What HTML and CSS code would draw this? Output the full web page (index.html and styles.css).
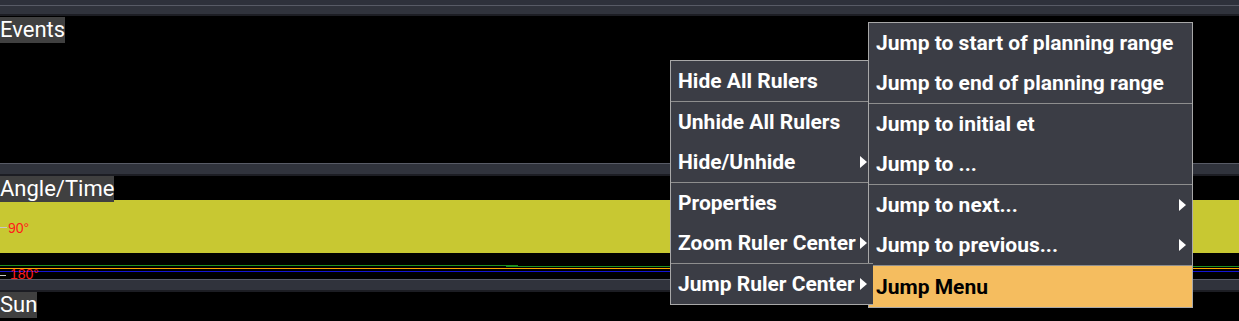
FILE: index.html
```html
<html>

<head>
  <title>Rulers</title>

  <link rel="stylesheet" href="styles.css">
</head>

<body>
  <div class="timeline">
    <div class="sep sep-top"></div>

    <div class="track track-events">
      <span class="track-label">Events</span>
    </div>

    <div class="sep"></div>

    <div class="track track-angle">
      <span class="track-label">Angle/Time</span>
      <div class="band">
        <span class="tick"></span>
        <span class="deg">90°</span>
      </div>
      <div class="plot-lines">
        <div class="line-green">
          <span class="seg-a"></span>
          <span class="seg-b"></span>
          <span class="seg-c"></span>
        </div>
        <div class="line-orange"></div>
        <div class="line-blue"></div>
      </div>
      <div class="deg-row">
        <span class="tick"></span>
        <span class="deg">180°</span>
      </div>
    </div>

    <div class="sep"></div>

    <div class="track track-sun">
      <span class="track-label">Sun</span>
    </div>
  </div>

  <!-- ruler context menu -->
  <ul class="menu menu-rulers">
    <li class="item">Hide All Rulers</li>
    <li class="item divided">Unhide All Rulers</li>
    <li class="item">Hide/Unhide <span class="arrow"></span></li>
    <li class="item divided">Properties</li>
    <li class="item">Zoom Ruler Center <span class="arrow"></span></li>
    <li class="item divided open">Jump Ruler Center <span class="arrow"></span></li>
  </ul>

  <!-- jump submenu -->
  <ul class="menu menu-jump">
    <li class="item">Jump to start of planning range</li>
    <li class="item">Jump to end of planning range</li>
    <li class="item divided">Jump to initial et</li>
    <li class="item">Jump to ...</li>
    <li class="item divided">Jump to next... <span class="arrow"></span></li>
    <li class="item">Jump to previous... <span class="arrow"></span></li>
    <li class="item divided active">Jump Menu</li>
  </ul>
</body>

</html>
```

FILE: styles.css
```css
body {
  margin: 0;
  width: 1239px;
  height: 321px;
  overflow: hidden;
  background-color: #000;
  position: relative;
  font-family: Roboto, sans-serif;
}

.sep {
  height: 13px;
  box-sizing: border-box;
  background-color: #30333c;
  border-top: 1px solid #585b66;
  border-bottom: 2px solid #1c1d23;
}

.sep-top {
  height: 16px;
  border-top: none;
  background: linear-gradient(to bottom, #2e313b 5px, #585b66 5px, #585b66 6px, #30333c 6px);
}

.track-events {
  height: 147px;
  padding-top: 1px;
  box-sizing: border-box;
}

.track-angle {
  height: 103px;
}

.track-sun {
  height: 29px;
  overflow: hidden;
}

.track-label {
  display: inline-block;
  position: relative;
  z-index: 1;
  height: 26px;
  line-height: 26px;
  font-size: 22px;
  color: #fff;
  background-color: #404040;
  vertical-align: top;
}

.band {
  margin-top: -2px;
  height: 53px;
  background-color: #c8c832;
  display: flex;
  align-items: center;
  padding-top: 2px;
  box-sizing: border-box;
}

.tick {
  display: inline-block;
  width: 7px;
  height: 1px;
  background-color: #c8c8c8;
}

.deg {
  font-family: "Liberation Sans", sans-serif;
  font-size: 14px;
  color: #ff1a1a;
  margin-left: 1px;
}

.plot-lines {
  margin-top: 12px;
}

.line-green {
  display: flex;
  align-items: flex-start;
  height: 2px;
}

.line-green>span {
  display: block;
  background-color: #1f8f1f;
}

.seg-a {
  width: 506px;
  height: 1px;
}

.seg-b {
  width: 12px;
  height: 2px;
}

.seg-c {
  flex: 1;
  height: 1px;
  margin-top: 1px;
}

.line-orange {
  height: 1px;
  margin-top: 1px;
  background-color: #ffa500;
}

.line-blue {
  height: 1px;
  margin-top: 2px;
  background-color: #1414d2;
}

.deg-row {
  display: flex;
  align-items: center;
  margin-top: -4px;
  height: 12px;
  line-height: 12px;
}

.deg-row .tick {
  width: 6px;
  margin-top: 3px;
}

.deg-row .deg {
  margin-left: 4px;
}

/* menus */

.menu {
  list-style: none;
  margin: 0;
  padding: 0;
  position: absolute;
  box-sizing: border-box;
  background-color: #3b3d45;
  border: 1px solid #a8a8a8;
  font-family: Roboto, sans-serif;
  font-weight: 700;
  font-size: 21px;
  color: #fff;
}

.menu-rulers {
  left: 670px;
  top: 60px;
  width: 203px;
  border-right: none;
}

.menu-jump {
  left: 868px;
  top: 22px;
  width: 325px;
}

.item {
  height: 40px;
  padding: 0 6px 0 7px;
  display: flex;
  align-items: center;
  justify-content: space-between;
  white-space: nowrap;
}

.item.divided {
  border-top: 1px solid #8e8e8e;
}

.item.open {
  position: relative;
  z-index: 2;
  background-color: #3b3d45;
  border-bottom: 1px solid #a8a8a8;
  margin-bottom: -1px;
}

.item.active {
  background-color: #f5bd5f;
  color: #000;
  height: 41px;
}

.arrow {
  width: 0;
  height: 0;
  border-left: 7px solid #fff;
  border-top: 6px solid transparent;
  border-bottom: 6px solid transparent;
}
```
